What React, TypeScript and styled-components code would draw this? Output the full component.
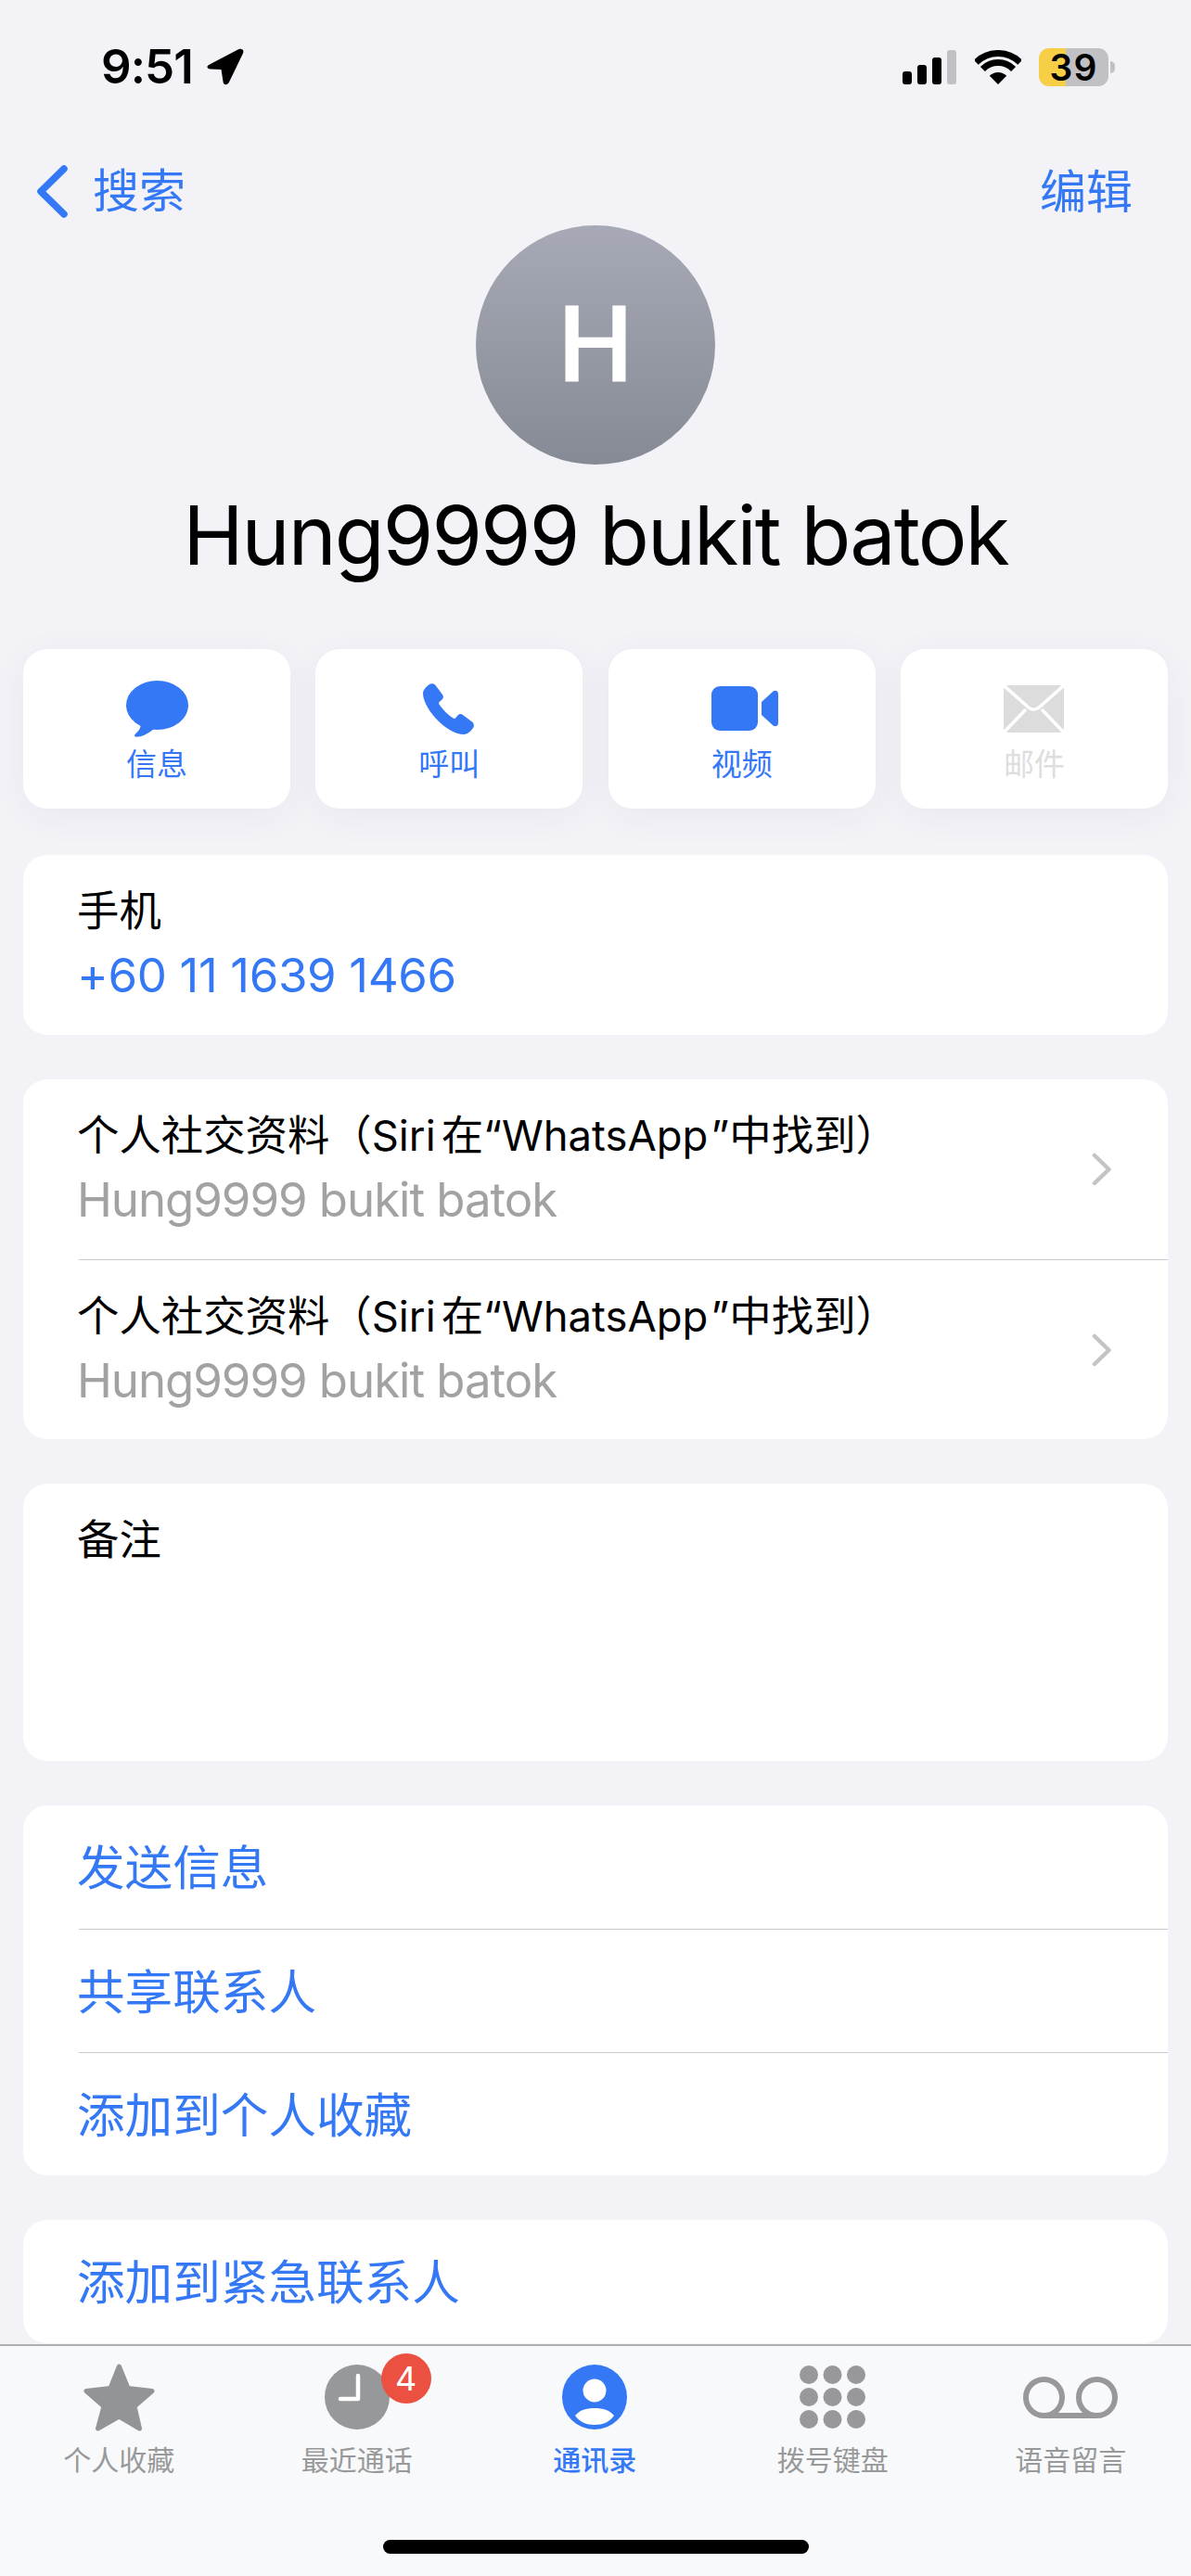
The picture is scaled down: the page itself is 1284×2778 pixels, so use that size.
import React from "react";
import styled, { createGlobalStyle } from "styled-components";

const BLUE = "#3478F6";
const FONT = `"Inter", "Noto Sans CJK SC", sans-serif`;

const Global = createGlobalStyle`
  html, body { margin: 0; padding: 0; background: #F2F2F7; }
  * { box-sizing: border-box; }
`;

const Page = styled.div`
  width: 1284px;
  height: 2778px;
  display: flex;
  flex-direction: column;
  overflow: hidden;
  background: #f2f2f7;
  font-family: ${FONT};
  color: #000;
`;

const StatusBar = styled.div`
  height: 170px;
  padding: 50px 89px 0 109px;
  display: flex;
  justify-content: space-between;
  align-items: flex-start;
`;
const TimeGroup = styled.div`
  display: flex;
  align-items: center;
  gap: 15px;
  height: 44px;
`;
const Time = styled.span`
  font-size: 51px;
  font-weight: 600;
  line-height: 44px;
  letter-spacing: -0.9px;
`;
const StatusIcons = styled.div`
  display: flex;
  align-items: center;
  height: 44px;
`;
const Signal = styled.svg`
  margin-right: 20px;
`;
const Wifi = styled.svg`
  margin-right: 19px;
`;
const Battery = styled.div`
  width: 75px;
  height: 41px;
  border-radius: 11px;
  background: linear-gradient(90deg, #f6cf47 0 29px, #c1c1c5 29px 100%);
  display: flex;
  align-items: center;
  justify-content: center;
  position: relative;
  font-size: 39px;
  font-weight: 600;
  letter-spacing: 1px;
  line-height: 41px;
  &::after {
    content: "";
    position: absolute;
    right: -7px;
    top: 14px;
    width: 5px;
    height: 13px;
    border-radius: 0 7px 7px 0;
    background: #c1c1c5;
  }
`;

const NavBar = styled.div`
  height: 73px;
  padding: 8px 63px 8px 39px;
  display: flex;
  justify-content: space-between;
  align-items: flex-start;
  color: ${BLUE};
  font-size: 50px;
`;
const BackLink = styled.div`
  display: flex;
  align-items: center;
  gap: 26px;
  height: 57px;
`;
const NavLabel = styled.span`
  line-height: 59px;
`;

const Header = styled.div`
  display: flex;
  flex-direction: column;
  align-items: center;
`;
const Avatar = styled.div`
  width: 258px;
  height: 258px;
  border-radius: 50%;
  background: linear-gradient(180deg, #a7aab6 0%, #868a94 100%);
  color: #fff;
  font-family: "Roboto", sans-serif;
  font-size: 115px;
  font-weight: 500;
  display: flex;
  align-items: center;
  justify-content: center;
  line-height: 1;
`;
const Name = styled.div`
  height: 199px;
  padding-top: 23px;
  font-size: 88px;
  line-height: 106px;
  font-weight: 400;
  letter-spacing: -1.95px;
`;

const Main = styled.div`
  flex: 1;
  min-height: 0;
  padding: 0 25px;
  display: flex;
  flex-direction: column;
  gap: 48px;
`;
const Actions = styled.div`
  display: grid;
  grid-template-columns: repeat(4, 288px);
  justify-content: space-between;
  margin-bottom: 2px;
`;
const ActionButton = styled.div<{ $off?: boolean }>`
  height: 172px;
  border-radius: 26px;
  background: #fff;
  box-shadow: 0 8px 40px rgba(60, 60, 90, 0.05);
  color: ${(p) => (p.$off ? "#DEDEDF" : BLUE)};
  display: flex;
  flex-direction: column;
  align-items: center;
`;
const ActionIcon = styled.div<{ $shift?: number }>`
  height: 104px;
  display: flex;
  align-items: center;
  justify-content: center;
  padding-top: 24px;
  margin-left: ${(p) => p.$shift ?? 0}px;
`;
const ActionLabel = styled.span`
  font-size: 33px;
  line-height: 40px;
`;

const Card = styled.div<{ $h?: number }>`
  background: #fff;
  border-radius: 26px;
  flex: none;
  ${(p) => (p.$h ? `height: ${p.$h}px;` : "")}
`;
const DetailRow = styled.div<{ $sep?: boolean }>`
  height: 194px;
  margin-left: 60px;
  padding: 32px 0 0 0;
  display: flex;
  justify-content: space-between;
  ${(p) => (p.$sep ? "border-top: 1.5px solid #c9c9cc;" : "")}
`;
const RowText = styled.div`
  display: flex;
  flex-direction: column;
  margin-left: -2px;
`;
const RowTitle = styled.div`
  font-size: 45.4px;
  line-height: 58px;
`;
const Latin = styled.span<{ $after: number }>`
  margin-right: ${(p) => p.$after}px;
`;
const RowValue = styled.div`
  font-size: 51px;
  line-height: 66px;
  margin-top: 7px;
  letter-spacing: -0.35px;
  color: ${BLUE};
`;
const RowSub = styled.div`
  font-size: 51px;
  line-height: 66px;
  margin-top: 7px;
  letter-spacing: -1.05px;
  color: #a2a2a5;
`;
const Chevron = styled.svg`
  margin: 47px 60px 0 0;
  flex: none;
`;
const NoteLabel = styled.div`
  padding: 32px 0 0 58px;
  font-size: 45.4px;
  line-height: 58px;
`;
const LinkRow = styled.div<{ $sep?: boolean }>`
  height: 133px;
  margin-left: 60px;
  padding-top: 1px;
  text-indent: -2px;
  color: ${BLUE};
  font-size: 51.6px;
  line-height: 133px;
  ${(p) => (p.$sep ? "border-top: 1.5px solid #c9c9cc;" : "")}
`;

const TabBar = styled.div`
  flex: none;
  height: 250px;
  margin-top: 2px;
  border-top: 2px solid #b0b0b2;
  background: #f8f9fa;
  position: relative;
  display: grid;
  grid-template-columns: repeat(5, 256.5px);
`;
const TabItem = styled.div<{ $active?: boolean }>`
  padding-top: 20px;
  display: flex;
  flex-direction: column;
  align-items: center;
  color: ${(p) => (p.$active ? BLUE : "#98999B")};
  font-weight: ${(p) => (p.$active ? 500 : 400)};
`;
const TabIcon = styled.div`
  height: 70px;
  position: relative;
  display: flex;
  align-items: center;
  justify-content: center;
`;
const TabLabel = styled.span`
  margin-top: 18px;
  font-size: 30px;
  line-height: 30px;
`;
const Badge = styled.div`
  position: absolute;
  left: 61px;
  top: -12px;
  width: 54px;
  height: 54px;
  border-radius: 50%;
  background: #eb5040;
  color: #fff;
  font-size: 36px;
  font-weight: 400;
  line-height: 54px;
  text-align: center;
`;
const HomeIndicator = styled.div`
  position: absolute;
  left: 413px;
  top: 209px;
  width: 459px;
  height: 15px;
  border-radius: 8px;
  background: #000;
`;

const rows = [0, 1];

export default function App() {
  return (
    <Page>
      <Global />
      <StatusBar>
        <TimeGroup>
          <Time>9:51</Time>
          <svg width="40" height="40" viewBox="0 0 40 40">
            <path
              d="M3 17.5 L34 1.3 C37.5 -0.3 40.5 2 39 5.5 L24 36.5 C22 40.5 18 40 17.5 36 L15.5 23 L4 22.5 C0 22 -1 19.5 3 17.5 Z"
              fill="#000"
            />
          </svg>
        </TimeGroup>
        <StatusIcons>
          <Signal width="58" height="37" viewBox="0 0 58 37">
            <rect x="0" y="23" width="10" height="14" rx="3" fill="#000" />
            <rect x="16" y="16" width="10" height="21" rx="3" fill="#000" />
            <rect x="32" y="8" width="10" height="29" rx="3" fill="#000" />
            <rect x="48" y="0" width="10" height="37" rx="3" fill="#C1C1C5" />
          </Signal>
          <Wifi width="50" height="37" viewBox="0 0 50 37">
            <path d="M1.3 13.3 A33.5 33.5 0 0 1 48.7 13.3" fill="none" stroke="#000" strokeWidth="7" />
            <path d="M8.4 20.4 A23.5 23.5 0 0 1 41.6 20.4" fill="none" stroke="#000" strokeWidth="7" />
            <path d="M15.8 27.8 A13 13 0 0 1 34.2 27.8 L25 37 Z" fill="#000" />
          </Wifi>
          <Battery>39</Battery>
        </StatusIcons>
      </StatusBar>

      <NavBar>
        <BackLink>
          <svg width="35" height="57" viewBox="0 0 35 57">
            <path d="M30 4 L5 28.5 L30 53" fill="none" stroke={BLUE} strokeWidth="7.5" strokeLinecap="round" strokeLinejoin="round" />
          </svg>
          <NavLabel>搜索</NavLabel>
        </BackLink>
        <NavLabel>编辑</NavLabel>
      </NavBar>

      <Header>
        <Avatar>H</Avatar>
        <Name>Hung9999 bukit batok</Name>
      </Header>

      <Main>
        <Actions>
          <ActionButton>
            <ActionIcon>
              <svg width="67" height="61" viewBox="0 0 67 61">
                <ellipse cx="33.5" cy="26.5" rx="33.5" ry="26.5" fill="currentColor" />
                <path d="M15.7 47 C16 51 13 55 9.5 58 C8 60 10 61 13 60.5 C19 60 25 56 30 52 Z" fill="currentColor" />
              </svg>
            </ActionIcon>
            <ActionLabel>信息</ActionLabel>
          </ActionButton>
          <ActionButton>
            <ActionIcon $shift={-2}>
              <svg width="55" height="55" viewBox="0 0 55 55">
                <path
                  d="M7 1 C9 -0.5 12 0 13.5 2 L21 12 C22.5 14 22 16 20.5 17.5 L17.5 20 C17 20.5 17 21.5 17.5 22.5 C21 28 27 34 32.5 37.5 C33.5 38 34.5 38 35 37.5 L37.5 34.5 C39 33 41 32.5 43 34 L53 41.5 C55 43 55.5 46 54 48 C51 52.5 47.5 55 44 55 C36 55 25 49 16 40 C7 31 0 19 0 11 C0 7.5 3 3.5 7 1 Z"
                  fill="currentColor"
                />
              </svg>
            </ActionIcon>
            <ActionLabel>呼叫</ActionLabel>
          </ActionButton>
          <ActionButton>
            <ActionIcon $shift={6}>
              <svg width="72" height="48" viewBox="0 0 72 48">
                <rect x="0" y="0" width="50" height="48" rx="9" fill="currentColor" />
                <path d="M54 17 L66 6 C68.5 3.5 72 5 72 8 L72 40 C72 43 68.5 44.5 66 42 L54 31 Z" fill="currentColor" />
              </svg>
            </ActionIcon>
            <ActionLabel>视频</ActionLabel>
          </ActionButton>
          <ActionButton $off>
            <ActionIcon>
              <svg width="65" height="51" viewBox="0 0 65 51">
                <rect x="0" y="0" width="65" height="51" rx="5" fill="#DCDCDC" />
                <path d="M1 1 L27 24 Q32.5 28.5 38 24 L64 1" fill="none" stroke="#fff" strokeWidth="3.5" />
                <path d="M1 50 L24 26 M64 50 L41 26" fill="none" stroke="#fff" strokeWidth="3.5" />
              </svg>
            </ActionIcon>
            <ActionLabel>邮件</ActionLabel>
          </ActionButton>
        </Actions>

        <Card>
          <DetailRow>
            <RowText>
              <RowTitle>手机</RowTitle>
              <RowValue>+60 11 1639 1466</RowValue>
            </RowText>
          </DetailRow>
        </Card>

        <Card>
          {rows.map((i) => (
            <DetailRow key={i} $sep={i > 0}>
              <RowText>
                <RowTitle>
                  个人社交资料（<Latin $after={6}>Siri</Latin>在“<Latin $after={3}>WhatsApp</Latin>”中找到）
                </RowTitle>
                <RowSub>Hung9999 bukit batok</RowSub>
              </RowText>
              <Chevron width="22" height="36" viewBox="0 0 22 36">
                <path d="M3 3 L18.5 18 L3 33" fill="none" stroke="#C4C4C7" strokeWidth="4.5" strokeLinecap="round" strokeLinejoin="round" />
              </Chevron>
            </DetailRow>
          ))}
        </Card>

        <Card $h={299}>
          <NoteLabel>备注</NoteLabel>
        </Card>

        <Card>
          <LinkRow>发送信息</LinkRow>
          <LinkRow $sep>共享联系人</LinkRow>
          <LinkRow $sep>添加到个人收藏</LinkRow>
        </Card>

        <Card>
          <LinkRow>添加到紧急联系人</LinkRow>
        </Card>
      </Main>

      <TabBar>
        <TabItem>
          <TabIcon>
            <svg width="77" height="73" viewBox="0 0 77 73">
              <path
                d="M38.4 3 L48 26.5 L74 29.5 L55 46 L60.5 70 L38.4 57 L15.5 70 L22 46 L3 29.5 L29 26.5 Z"
                fill="#929497"
                stroke="#929497"
                strokeWidth="5"
                strokeLinejoin="round"
              />
            </svg>
          </TabIcon>
          <TabLabel>个人收藏</TabLabel>
        </TabItem>
        <TabItem>
          <TabIcon>
            <svg width="70" height="70" viewBox="0 0 70 70">
              <circle cx="35" cy="35" r="35" fill="#97989A" />
              <path d="M36 12 L36 37 L17 37" fill="none" stroke="#fff" strokeWidth="4.5" strokeLinecap="round" strokeLinejoin="round" />
            </svg>
            <Badge>4</Badge>
          </TabIcon>
          <TabLabel>最近通话</TabLabel>
        </TabItem>
        <TabItem $active>
          <TabIcon>
            <svg width="70" height="70" viewBox="0 0 70 70">
              <circle cx="35" cy="35" r="35" fill={BLUE} />
              <circle cx="35" cy="28" r="12.5" fill="#fff" />
              <path d="M14 55 C19 49 26 47 35 47 C44 47 51 49 56 55 C51 62 44 65 35 65 C26 65 19 62 14 55 Z" fill="#fff" />
            </svg>
          </TabIcon>
          <TabLabel>通讯录</TabLabel>
        </TabItem>
        <TabItem>
          <TabIcon>
            <svg width="71" height="70" viewBox="0 0 71 70">
              {[10, 35.5, 61].map((x) =>
                [11, 35, 59].map((y) => <circle key={`${x}-${y}`} cx={x} cy={y} r="10" fill="#98989A" />)
              )}
            </svg>
          </TabIcon>
          <TabLabel>拨号键盘</TabLabel>
        </TabItem>
        <TabItem>
          <TabIcon>
            <svg width="102" height="45" viewBox="0 0 102 45">
              <circle cx="22.5" cy="22.5" r="19.5" fill="none" stroke="#98989A" strokeWidth="6" />
              <circle cx="79.5" cy="22.5" r="19.5" fill="none" stroke="#98989A" strokeWidth="6" />
              <path d="M22.5 42 L79.5 42" stroke="#98989A" strokeWidth="6" />
            </svg>
          </TabIcon>
          <TabLabel>语音留言</TabLabel>
        </TabItem>
        <HomeIndicator />
      </TabBar>
    </Page>
  );
}
